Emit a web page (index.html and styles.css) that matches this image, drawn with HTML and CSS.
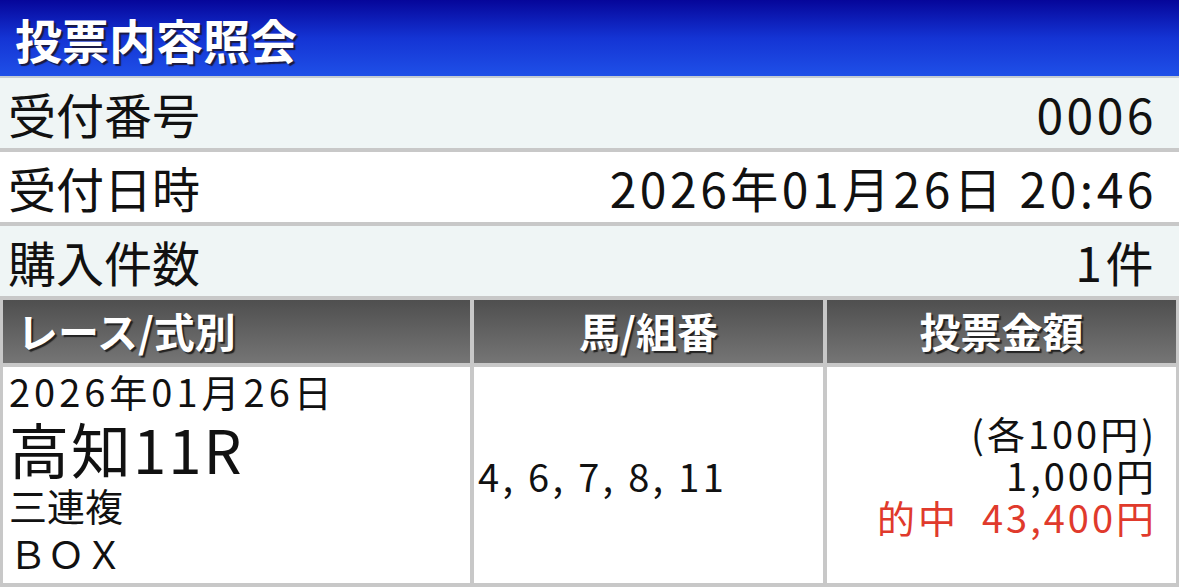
FILE: index.html
```html
<!DOCTYPE html>
<html lang="ja">
<head>
<meta charset="UTF-8">
<meta name="viewport" content="width=device-width, initial-scale=1.0">
<title>投票内容照会</title>
<link rel="stylesheet" href="styles.css">
</head>
<body>

<h1 class="title">投票内容照会</h1>

<div class="info">
    <div class="info-row shaded">
        <span class="label">受付番号</span>
        <span class="value">0006</span>
    </div>
    <div class="info-row">
        <span class="label">受付日時</span>
        <span class="value">2026年01月26日 20:46</span>
    </div>
    <div class="info-row shaded">
        <span class="label">購入件数</span>
        <span class="value">1件</span>
    </div>
</div>

<div class="bets">
    <div class="head left">レース/式別</div>
    <div class="head">馬/組番</div>
    <div class="head">投票金額</div>

    <div class="cell race">
        <div class="line">2026年01月26日</div>
        <div class="line big">高知11R</div>
        <div class="line plain">三連複</div>
        <div class="line plain">ＢＯＸ</div>
    </div>
    <div class="cell numbers">4, 6, 7, 8, 11</div>
    <div class="cell amount">
        <div>(各100円)</div>
        <div>1,000円</div>
        <div class="hit">的中&nbsp;&nbsp;43,400円</div>
    </div>
</div>

</body>
</html>
```

FILE: styles.css
```css
body {
    margin: 0;
    padding: 0;
    width: 1179px;
    font-family: "Noto Sans CJK JP", "Noto Sans", sans-serif;
    color: #111;
    background-color: #fff;
}
.title {
    margin: 0;
    height: 76px;
    padding-left: 15px;
    display: flex;
    align-items: center;
    font-size: 47px;
    font-weight: bold;
    color: #fff;
    text-shadow: 2px 2px 1px #1a1a40;
    background: linear-gradient(to bottom, #06069a 0%, #1434d4 50%, #1f50e8 100%);
    border-bottom: 2px solid #c4ccd4;
}
.info-row {
    height: 70px;
    padding: 0 22px 0 8px;
    display: flex;
    justify-content: space-between;
    align-items: center;
    font-size: 48px;
    background-color: #fff;
}
.info-row + .info-row {
    border-top: 4px solid #c8c8c8;
}
.info-row.shaded {
    background-color: #eff5f5;
}
.info-row .value {
    letter-spacing: 3.5px;
}

.bets {
    display: grid;
    grid-template-columns: 467px 349px 349px;
    grid-template-rows: 63px 216px;
    gap: 4px;
    padding: 4px 3px;
    background-color: #c8c8c8;
}
.head {
    display: flex;
    align-items: center;
    justify-content: center;
    padding-bottom: 3px;
    font-size: 41px;
    font-weight: bold;
    color: #fff;
    text-shadow: 2px 2px 1px #222;
    background: linear-gradient(to bottom, #4f4f4f, #757575);
}
.head.left {
    justify-content: flex-start;
    padding-left: 14px;
}
.cell {
    background-color: #fff;
    font-size: 38px;
    letter-spacing: 4px;
}
.race {
    padding-left: 6px;
}
.race .line {
    line-height: 48px;
}
.race .big {
    font-size: 60px;
    line-height: 66px;
    letter-spacing: 2px;
}
.race .plain {
    letter-spacing: 0;
}
.numbers {
    display: flex;
    align-items: center;
    padding-left: 4px;
    letter-spacing: 3.3px;
}
.amount {
    display: flex;
    flex-direction: column;
    justify-content: center;
    align-items: flex-end;
    padding-right: 19px;
    line-height: 42px;
    letter-spacing: 3px;
}
.hit {
    color: #e03a2c;
}
```
